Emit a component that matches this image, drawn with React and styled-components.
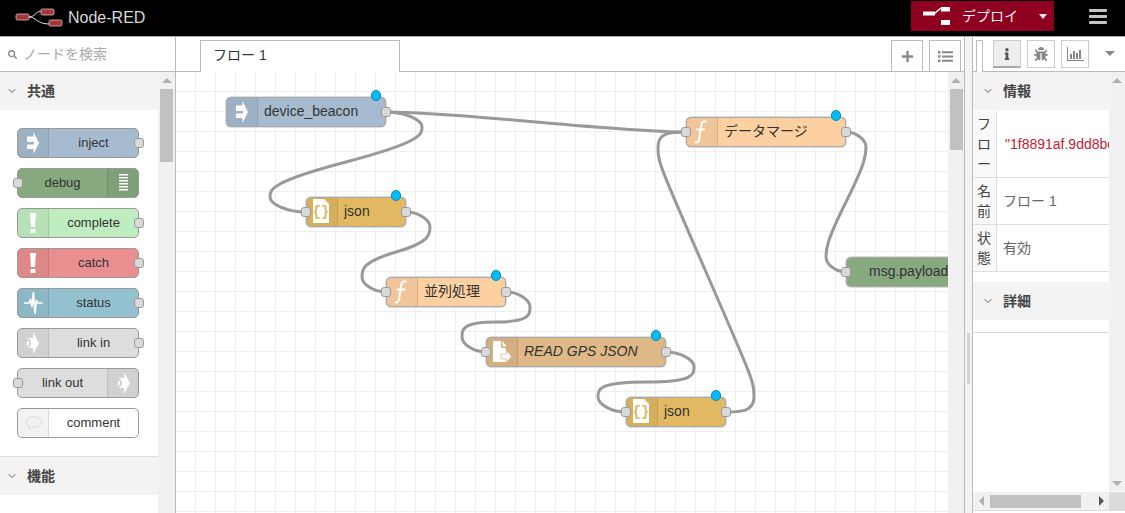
import React from 'react'
import styled, { createGlobalStyle } from 'styled-components'
import { ChevronDown } from 'lucide-react'
import { FaBug, FaInfo, FaPlus, FaSearch } from 'react-icons/fa'

const GlobalStyle = createGlobalStyle`
  html, body { margin: 0; height: 100%; overflow: hidden; background: #fff; }
  body { font: 14px/20px "Liberation Sans", "Noto Sans CJK JP", sans-serif; color: #333; }
  #root { height: 100%; }
  * { box-sizing: border-box; }
`

const Page = styled.div`
  height: 513px;
  display: flex;
  flex-direction: column;
`
const Header = styled.header`
  height: 37px;
  flex: none;
  background: #000;
  border-bottom: 1px solid #aaa;
  display: flex;
  align-items: flex-start;
  padding-left: 15px;
`
const Brand = styled.div`
  display: flex;
  align-items: center;
  gap: 3px;
  height: 36px;
  font-size: 16px;
  color: #d8d8d8;
  flex: 1;
`
const DeployButton = styled.div`
  width: 143px;
  height: 30px;
  margin-top: 1px;
  background: #8f0020;
  color: #eee;
  display: flex;
  align-items: center;
  padding-left: 12px;
`
const DeployLabel = styled.span`
  margin-left: 11px;
  flex: 1;
`
const DeployCaret = styled.span`
  width: 0;
  height: 0;
  margin-right: 7px;
  border: 4.5px solid transparent;
  border-top: 5px solid #eee;
  border-bottom: 0;
`
const MenuButton = styled.div`
  width: 18px;
  margin: 9px 18px 0 35px;
  display: flex;
  flex-direction: column;
  gap: 3px;
`
const MenuBar = styled.span`
  height: 3px;
  background: #c4c4c4;
  border-radius: 1px;
`
const Main = styled.div`
  flex: 1;
  min-height: 0;
  display: flex;
`

const Palette = styled.aside`
  width: 176px;
  flex: none;
  border-right: 1px solid #bbb;
  display: flex;
  flex-direction: column;
`
const SearchBox = styled.div`
  height: 35px;
  flex: none;
  border-bottom: 1px solid #bbb;
  display: flex;
  align-items: center;
  gap: 6px;
  padding-left: 8px;
  color: #aaa;
  svg { color: #888; }
`
const PaletteBody = styled.div`
  flex: 1;
  min-height: 0;
  display: flex;
`
const PaletteList = styled.div`
  width: 158px;
  flex: none;
  overflow: hidden;
`
const SectionHeader = styled.div`
  height: 38px;
  background: #f3f3f3;
  display: flex;
  align-items: center;
  gap: 9px;
  padding-left: ${p => p.$inset}px;
  font-weight: bold;
  color: #444;
  ${p => p.$ruled && 'border-top: 1px solid #ddd; height: 39px;'}
  svg { color: #666; }
`
const PaletteNodes = styled.div`
  padding: 18px 19px 18px 17px;
  display: flex;
  flex-direction: column;
  gap: 10px;
`
const NodeBox = styled.div`
  height: 30px;
  width: ${p => p.$width}px;
  background: ${p => p.$color};
  border: 1px solid #999;
  border-radius: 5px;
  position: relative;
  display: flex;
  flex-direction: ${p => (p.$iconRight ? 'row-reverse' : 'row')};
  flex: none;
  font-size: 13px;
  line-height: 28px;
`
const CanvasNode = styled(NodeBox)`
  position: absolute;
  left: ${p => p.$x}px;
  top: ${p => p.$y}px;
  font-size: 14px;
  line-height: 26px;
  font-style: ${p => (p.$italic ? 'italic' : 'normal')};
  border-color: #aaa;
  box-shadow: 0 0 0 0.5px #bbb;
`
const IconCell = styled.div`
  width: 31px;
  height: 28px;
  flex: none;
  background: rgba(0, 0, 0, 0.05);
  border-right: ${p => (p.$right ? '0' : '1px solid rgba(0, 0, 0, 0.1)')};
  border-left: ${p => (p.$right ? '1px solid rgba(0, 0, 0, 0.1)' : '0')};
  border-radius: ${p => (p.$right ? '0 4px 4px 0' : '4px 0 0 4px')};
  svg {
    display: block;
    margin: -1px 0 0 ${p => (p.$right ? '0' : '-1px')};
    overflow: visible;
  }
`
const PaletteLabel = styled.div`
  flex: 1;
  text-align: center;
`
const CanvasLabel = styled.div`
  padding-left: ${p => p.$pad}px;
  white-space: nowrap;
`
const Port = styled.span`
  position: absolute;
  top: 9px;
  ${p => (p.$side === 'left' ? `left: -${p.$out}px;` : 'right: -6px;')}
  width: 10px;
  height: 10px;
  background: #d9d9d9;
  border: 1px solid #999;
  border-radius: 3px;
`
const ChangedDot = styled.span`
  position: absolute;
  top: -8px;
  right: 4px;
  width: 10.500px;
  height: 10.500px;
  border-radius: 50%;
  background: #00bcff;
  border: 1px solid #0a86b0;
`

const Workspace = styled.section`
  flex: 1;
  min-width: 0;
  display: flex;
  flex-direction: column;
`
const TabBar = styled.div`
  height: 35px;
  flex: none;
  border-bottom: 1px solid #bbb;
  display: flex;
  align-items: flex-start;
  padding: 3px 3px 0 24px;
  gap: 6px;
`
const FlowTab = styled.div`
  width: 200px;
  height: 32px;
  margin-right: auto;
  background: #fff;
  border: 1px solid #bbb;
  border-bottom: 0;
  padding: 4px 12px;
  position: relative;
`
const TabButton = styled.div`
  width: 32px;
  height: 31px;
  border: 1px solid #bbb;
  border-bottom: 0;
  color: #888;
  display: flex;
  align-items: center;
  justify-content: center;
`
const CanvasRow = styled.div`
  flex: 1;
  min-height: 0;
  display: flex;
`
const Canvas = styled.div`
  flex: 1;
  min-width: 0;
  position: relative;
  overflow: hidden;
  background-color: #fff;
  background-image:
    linear-gradient(#eee 1px, transparent 1px),
    linear-gradient(90deg, #eee 1px, transparent 1px);
  background-size: 20px 20px;
  background-position: 19px 19px;
`
const WireLayer = styled.svg`
  position: absolute;
  left: 0;
  top: 0;
  width: 100%;
  height: 100%;
`
const Wire = styled.path`
  fill: none;
  stroke: #999;
  stroke-width: 3;
`

const VTrack = styled.div`
  width: ${p => p.$width}px;
  flex: none;
  background: #f1f1f1;
  display: flex;
  flex-direction: column;
  align-items: center;
  padding-top: 6px;
`
const UpArrow = styled.span`
  width: 0;
  height: 0;
  border: 5px solid transparent;
  border-bottom: 5px solid #b0b0b0;
  border-top: 0;
`
const DownArrow = styled.span`
  width: 0;
  height: 0;
  margin: auto 0 5px;
  border: 5px solid transparent;
  border-top: 5px solid #b0b0b0;
  border-bottom: 0;
`
const VThumb = styled.div`
  width: 13px;
  height: ${p => p.$height}px;
  margin-top: 6px;
  background: #c1c1c1;
`

const Separator = styled.div`
  width: 9px;
  flex: none;
  background: #f3f3f3;
  border-left: 1px solid #bbb;
  border-right: 1px solid #bbb;
  padding: 296px 2px 0;
`
const SeparatorHandle = styled.div`
  width: 3px;
  height: 51px;
  background: #d4d4d4;
`

const Sidebar = styled.aside`
  width: 152px;
  flex: none;
  display: flex;
  flex-direction: column;
`
const SideTabs = styled.div`
  height: 35px;
  flex: none;
  border-bottom: 1px solid #bbb;
  display: flex;
  align-items: flex-start;
  padding: 3px 0 0 3px;
`
const StubTab = styled.div`
  width: 7px;
  height: 32px;
  background: #fff;
  border: 1px solid #bbb;
  border-bottom: 0;
  margin-right: 10px;
`
const SideTab = styled.div`
  width: 28px;
  height: 28px;
  margin-right: 6px;
  border: 1px solid #ccc;
  background: ${p => (p.$active ? '#eee' : '#fff')};
  ${p => p.$active && 'border-bottom: 2px solid #aaa;'}
  color: ${p => (p.$active ? '#555' : '#888')};
  display: flex;
  align-items: center;
  justify-content: center;
`
const SideCaret = styled.span`
  width: 0;
  height: 0;
  margin: 11px 0 0 10px;
  border: 5px solid transparent;
  border-top: 5px solid #888;
  border-bottom: 0;
`
const SideBody = styled.div`
  flex: 1;
  min-height: 0;
  display: flex;
`
const SideContent = styled.div`
  flex: 1;
  min-width: 0;
  overflow: hidden;
`
const InfoTable = styled.div`
  margin-top: 1px;
`
const InfoRow = styled.div`
  display: grid;
  grid-template-columns: 24px 1fr;
  border-bottom: 1px solid #ddd;
`
const InfoKey = styled.div`
  background: #f9f9f9;
  border-right: 1px solid #ddd;
  padding: 3px 4px;
  line-break: anywhere;
  word-break: break-all;
  color: #444;
`
const InfoValue = styled.div`
  align-self: center;
  padding-left: ${p => (p.$code ? '8px' : '6px')};
  white-space: nowrap;
  overflow: hidden;
  color: ${p => (p.$code ? '#c5203a' : '#666')};
`
const SectionGap = styled.div`
  height: 10px;
`
const SectionRule = styled.div`
  height: 13px;
  border-bottom: 1px solid #ddd;
`
const HScroll = styled.div`
  height: 18px;
  margin-top: 1px;
  flex: none;
  background: #f1f1f1;
  display: flex;
  align-items: center;
  padding-left: 6px;
`
const LeftArrow = styled.span`
  width: 0;
  height: 0;
  border: 5px solid transparent;
  border-right: 5px solid #b0b0b0;
  border-left: 0;
`
const RightArrow = styled.span`
  width: 0;
  height: 0;
  margin-left: 18px;
  border: 5px solid transparent;
  border-left: 5px solid #555;
  border-right: 0;
`
const HThumb = styled.div`
  width: 91px;
  height: 13px;
  margin-left: 6px;
  background: #c1c1c1;
`
const ScrollCorner = styled.div`
  width: 16px;
  height: 18px;
  margin-left: auto;
  background: #dcdcdc;
`
const SideFooter = styled.div`
  height: 3px;
  flex: none;
  border-top: 1px solid #ddd;
`

// node glyphs, coordinates measured from the node's outer corner
const W = { fill: '#fff' }
const glyphs = {
  inject: <path {...W} d="M10 8.500h6.500V4L22 15l-5.500 11v-5H10v-4.500h7V14h-7z" />,
  debug: <path {...W} d="M11 6h9v1.500h-9zM11 9h9v1.500h-9zM11 12h9v1.500h-9zM11 15h9v1.500h-9zM11 18h9v1.500h-9zM11 21h9v1.500h-9z" />,
  alert: <path {...W} d="M13 5h6l-1 14h-4zM13.500 21h5v4h-5z" />,
  status: <path fill="none" stroke="#fff" strokeWidth="1.700" d="M7 15h5l1.500-3 1.500 7 1.500-15 1.500 22 1.500-14 1 3h5" />,
  link: <path {...W} fillRule="evenodd" d="M10 10h6V4l6 11-6 11v-6h-6c2.500-.5 4-2.500 4-5s-1.500-4.500-4-5zm0 2.500V18c1.500-.5 2-1.500 2-2.800s-.5-2.200-2-2.700z" />,
  comment: <path fill="none" stroke="#d8d8d8" strokeWidth="1" d="M17 9c4.500 0 8 2.300 8 5s-3.500 5-8 5h-1.500L12 22l.5-3.500C10 17.500 9 16 9 14c0-2.700 3.500-5 8-5z" />,
  func: <path fill="none" stroke="#fff" strokeWidth="2" d="M20.500 5c-3-1.500-4.700-.5-5.200 2.500l-2.300 15c-.5 2.500-2 3.500-4 2.500M10.500 12.500h8.500" />,
  fileIn: (
    <g>
      <path {...W} d="M7 4h8v7h5v14H7zM16.500 4l4 5.500h-4z" />
      <path fill="#fff" stroke="#deb887" strokeWidth="0.8" d="M15 17h5.500v-3.500l5 6-5 6V22H15z" />
    </g>
  ),
  json: (
    <g>
      <path {...W} d="M7 2h11l5 5v19H7z" />
      <text x="15" y="19" textAnchor="middle" fontSize="14" fontWeight="bold" fontFamily="Liberation Mono" fill="#deb45c">{'{}'}</text>
    </g>
  ),
}

const NodeIcon = ({ kind, right }) => (
  <IconCell $right={right}>
    <svg width="30" height="30" viewBox="0 0 30 30">{glyphs[kind]}</svg>
  </IconCell>
)

const paletteNodes = [
  { label: 'inject', color: '#a6bbcf', icon: 'inject', out: true },
  { label: 'debug', color: '#87a980', icon: 'debug', right: true, in: true },
  { label: 'complete', color: '#c0edc0', icon: 'alert', out: true },
  { label: 'catch', color: '#e98f8f', icon: 'alert', out: true },
  { label: 'status', color: '#94c1d0', icon: 'status', out: true },
  { label: 'link in', color: '#dddddd', icon: 'link', out: true },
  { label: 'link out', color: '#dddddd', icon: 'link', right: true, in: true },
  { label: 'comment', color: '#ffffff', icon: 'comment' },
]

const flowNodes = [
  { id: 'beacon', label: 'device_beacon', x: 50, y: 25, w: 160, color: '#a6bbcf', icon: 'inject', out: true, changed: true },
  { id: 'json1', label: 'json', x: 130, y: 125, w: 100, color: '#e2b962', icon: 'json', in: true, out: true, changed: true },
  { id: 'para', label: '並列処理', x: 210, y: 205, w: 120, color: '#fdd0a2', icon: 'func', in: true, out: true, changed: true },
  { id: 'gps', label: 'READ GPS JSON', x: 310, y: 265, w: 180, color: '#deb887', icon: 'fileIn', in: true, out: true, changed: true, italic: true },
  { id: 'json2', label: 'json', x: 450, y: 325, w: 100, color: '#e2b962', icon: 'json', in: true, out: true, changed: true },
  { id: 'merge', label: 'データマージ', x: 510, y: 45, w: 160, color: '#fdd0a2', icon: 'func', in: true, out: true, changed: true },
  { id: 'payload', label: 'msg.payload', x: 670, y: 185, w: 160, color: '#87a980', in: true },
]

const links = [
  ['beacon', 'json1'],
  ['beacon', 'merge'],
  ['json1', 'para'],
  ['para', 'gps'],
  ['gps', 'json2'],
  ['json2', 'merge'],
  ['merge', 'payload'],
]

// same curve maths the flow editor uses for its wires
const wirePath = (ox, oy, dx0, dy0) => {
  const nw = 100
  const nh = 30
  const dy = dy0 - oy
  const dx = dx0 - ox
  const delta = Math.sqrt(dy * dy + dx * dx)
  let scale = 0.75
  if (dx > 0) {
    if (delta < nw) scale = 0.75 - 0.75 * ((nw - delta) / nw)
    return `M ${ox} ${oy} C ${ox + nw * scale} ${oy} ${dx0 - scale * nw} ${dy0} ${dx0} ${dy0}`
  }
  scale = 0.4 - 0.2 * Math.max(0, (nw - Math.min(Math.abs(dx), Math.abs(dy))) / nw)
  const midX = Math.floor(dx0 - dx / 2)
  const midY = Math.floor(dy0 - dy / 2)
  const cp = nh / 2
  const y1 = (dy0 + midY) / 2
  const topX = ox + nw * scale
  const topY = dy > 0 ? Math.min(y1 - dy / 2, oy + cp) : Math.max(y1 - dy / 2, oy - cp)
  const bottomX = dx0 - nw * scale
  const bottomY = dy > 0 ? Math.max(y1, dy0 - cp) : Math.min(y1, dy0 + cp)
  const x1 = (ox + topX) / 2
  const scy = dy > 0 ? 1 : -1
  const c = [
    [x1, oy],
    [topX, dy > 0 ? Math.max(oy, topY - cp) : Math.min(oy, topY + cp)],
    [topX, dy > 0 ? Math.min(midY, topY + cp) : Math.max(midY, topY - cp)],
    [bottomX, dy > 0 ? Math.max(midY, bottomY - cp) : Math.min(midY, bottomY + cp)],
    [(dx0 + bottomX) / 2, dy0],
  ]
  if (c[2][1] === topY + scy * cp) {
    if (Math.abs(dy) < cp * 10) {
      c[1][1] = topY - (scy * cp) / 2
      c[3][1] = bottomY - (scy * cp) / 2
    }
    c[2][0] = topX
  }
  return `M ${ox} ${oy} C ${c[0][0]} ${c[0][1]} ${c[1][0]} ${c[1][1]} ${topX} ${topY} S ${c[2][0]} ${c[2][1]} ${midX} ${midY} S ${c[3][0]} ${c[3][1]} ${bottomX} ${bottomY} S ${c[4][0]} ${c[4][1]} ${dx0} ${dy0}`
}

const Logo = () => (
  <svg width="50" height="20" viewBox="0 0 50 20">
    <path d="M14 9c6 0 6-5 12-6M14 9c7 0 8 7 20 7" fill="none" stroke="#ddd" strokeWidth="1" />
    <rect x="1" y="6" width="13" height="6" rx="1.500" fill="#aa3338" stroke="#ddd" strokeWidth="0.7" />
    <rect x="26" y="1" width="13" height="6" rx="1.500" fill="#aa3338" stroke="#ddd" strokeWidth="0.7" />
    <rect x="34" y="12" width="13" height="6" rx="1.500" fill="#aa3338" stroke="#ddd" strokeWidth="0.7" />
  </svg>
)

const DeployIcon = () => (
  <svg width="28" height="20" viewBox="0 0 28 20">
    <path d="M0 5.500h12v4H0zM18 1h9v4.500h-9zM18 14h9v5h-9z" fill="#fff" />
    <path d="M11 8l7-6" stroke="#fff" strokeWidth="1.500" fill="none" />
  </svg>
)

const ChartIcon = () => (
  <svg width="18" height="16" viewBox="0 0 18 16" fill="#888">
    <path d="M1 1h1v13h16v1H1z" />
    <path d="M4 8h2v5H4zM7 5h2v8H7zM10 7h2v6h-2zM13 4h2v9h-2z" />
  </svg>
)

const ListIcon = () => (
  <svg width="15" height="11" viewBox="0 0 15 11" fill="#888">
    <path d="M0 0h2.500v2.500H0zM0 4.200h2.500v2.500H0zM0 8.500h2.500V11H0zM4 .300h11v2H4zM4 4.500h11v2H4zM4 8.700h11v2H4z" />
  </svg>
)

const App = () => {
  const byId = Object.fromEntries(flowNodes.map(n => [n.id, n]))
  return (
    <Page>
      <GlobalStyle />
      <Header>
        <Brand>
          <Logo />
          Node-RED
        </Brand>
        <DeployButton>
          <DeployIcon />
          <DeployLabel>デプロイ</DeployLabel>
          <DeployCaret />
        </DeployButton>
        <MenuButton>
          <MenuBar />
          <MenuBar />
          <MenuBar />
        </MenuButton>
      </Header>
      <Main>
        <Palette>
          <SearchBox>
            <FaSearch size={9} />
            ノードを検索
          </SearchBox>
          <PaletteBody>
            <PaletteList>
              <SectionHeader $inset={6}>
                <ChevronDown size={12} />
                共通
              </SectionHeader>
              <PaletteNodes>
                {paletteNodes.map(n => (
                  <NodeBox key={n.label} $width={122} $color={n.color} $iconRight={n.right}>
                    {n.in && <Port $side="left" $out={5} />}
                    <NodeIcon kind={n.icon} right={n.right} />
                    <PaletteLabel>{n.label}</PaletteLabel>
                    {n.out && <Port $side="right" />}
                  </NodeBox>
                ))}
              </PaletteNodes>
              <SectionHeader $inset={6} $ruled>
                <ChevronDown size={12} />
                機能
              </SectionHeader>
            </PaletteList>
            <VTrack $width={17}>
              <UpArrow />
              <VThumb $height={73} />
            </VTrack>
          </PaletteBody>
        </Palette>
        <Workspace>
          <TabBar>
            <FlowTab>フロー 1</FlowTab>
            <TabButton><FaPlus size={13} /></TabButton>
            <TabButton><ListIcon /></TabButton>
          </TabBar>
          <CanvasRow>
            <Canvas>
              <WireLayer>
                {links.map(([from, to]) => {
                  const a = byId[from]
                  const b = byId[to]
                  return <Wire key={from + to} d={wirePath(a.x + a.w, a.y + 15, b.x, b.y + 15)} />
                })}
              </WireLayer>
              {flowNodes.map(n => (
                <CanvasNode key={n.id} $x={n.x} $y={n.y} $width={n.w} $color={n.color} $italic={n.italic}>
                  {n.in && <Port $side="left" $out={6} />}
                  {n.icon && <NodeIcon kind={n.icon} />}
                  <CanvasLabel $pad={n.icon ? 6 : 22}>{n.label}</CanvasLabel>
                  {n.out && <Port $side="right" />}
                  {n.changed && <ChangedDot />}
                </CanvasNode>
              ))}
            </Canvas>
            <VTrack $width={16}>
              <UpArrow />
              <VThumb $height={61} />
            </VTrack>
          </CanvasRow>
        </Workspace>
        <Separator>
          <SeparatorHandle />
        </Separator>
        <Sidebar>
          <SideTabs>
            <StubTab />
            <SideTab $active><FaInfo size={12} /></SideTab>
            <SideTab><FaBug size={14} /></SideTab>
            <SideTab><ChartIcon /></SideTab>
            <SideCaret />
          </SideTabs>
          <SideBody>
            <SideContent>
              <SectionHeader $inset={9}>
                <ChevronDown size={12} />
                情報
              </SectionHeader>
              <InfoTable>
                <InfoRow>
                  <InfoKey>フロー</InfoKey>
                  <InfoValue $code>"1f8891af.9dd8be"</InfoValue>
                </InfoRow>
                <InfoRow>
                  <InfoKey>名前</InfoKey>
                  <InfoValue>フロー 1</InfoValue>
                </InfoRow>
                <InfoRow>
                  <InfoKey>状態</InfoKey>
                  <InfoValue>有効</InfoValue>
                </InfoRow>
              </InfoTable>
              <SectionGap />
              <SectionHeader $inset={9}>
                <ChevronDown size={12} />
                詳細
              </SectionHeader>
              <SectionRule />
            </SideContent>
            <VTrack $width={16}>
              <UpArrow />
              <DownArrow />
            </VTrack>
          </SideBody>
          <HScroll>
            <LeftArrow />
            <HThumb />
            <RightArrow />
            <ScrollCorner />
          </HScroll>
          <SideFooter />
        </Sidebar>
      </Main>
    </Page>
  )
}

export default App
